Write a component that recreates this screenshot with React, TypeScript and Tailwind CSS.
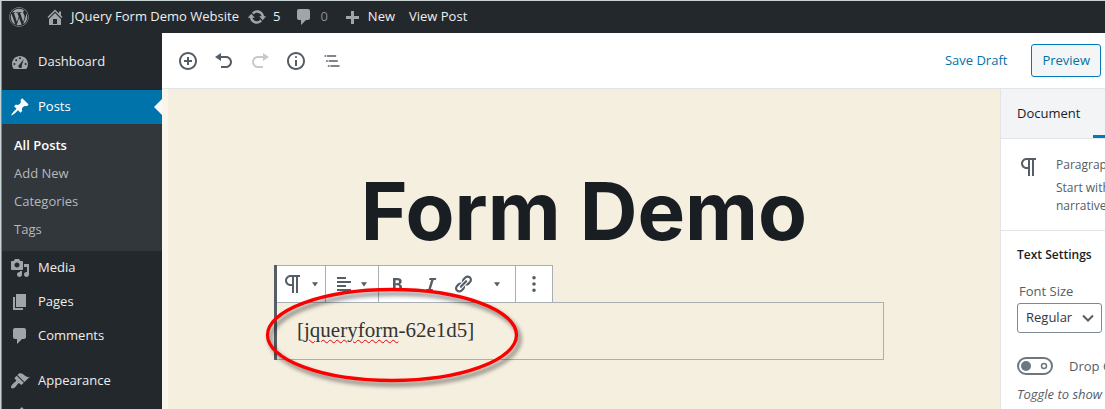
import type { ReactNode } from "react";
import { FaWordpress } from "react-icons/fa";

const paths = {
  home: "M16 8.5l1.53 1.53-1.06 1.06L10 4.6l-6.47 6.49-1.06-1.06L10 2.5l4 4v-2h2v4zm-6-2.46l6 5.99V18H4v-5.97zM12 17v-5H8v5h4z",
  update:
    "M10.2 3.28c3.53 0 6.43 2.61 6.92 6h2.08l-3.5 4-3.5-4h2.32c-.45-1.97-2.21-3.45-4.32-3.45-1.45 0-2.73.71-3.54 1.78L4.95 5.66C6.23 4.2 8.11 3.28 10.2 3.28zm-.4 13.44c-3.52 0-6.43-2.61-6.92-6H.8l3.5-4c1.17 1.33 2.33 2.67 3.5 4H5.48c.45 1.97 2.21 3.45 4.32 3.45 1.45 0 2.73-.71 3.54-1.78l1.71 1.95c-1.28 1.46-3.15 2.38-5.25 2.38z",
  comment: "M5 2h9c1.1 0 2 .9 2 2v7c0 1.1-.9 2-2 2h-2l-5 5v-5H5c-1.1 0-2-.9-2-2V4c0-1.1.9-2 2-2z",
  plus: "M17 9v3h-5v5H9v-5H4V9h5V4h3v5h5z",
  dashboard:
    "M3.76 17h12.48A7.98 7.98 0 0 0 18 12c0-4.41-3.58-8-8-8s-8 3.59-8 8c0 1.83.66 3.6 1.76 5zM9 6.2a1 1 0 1 1 2 0 1 1 0 1 1-2 0zM5.2 8.2a1 1 0 1 1 2 0 1 1 0 1 1-2 0zM3.4 12a1 1 0 1 1 2 0 1 1 0 1 1-2 0zM14.6 12a1 1 0 1 1 2 0 1 1 0 1 1-2 0zM13.9 7.1l-2.2 6.3c.5.9.2 2-.7 2.5-.9.4-2 .1-2.4-.8-.4-.8-.1-1.9.7-2.3z",
  pin: "M10.44 3.02l1.82-1.82 6.36 6.35-1.83 1.82c-1.05-.68-2.48-.57-3.41.36l-.75.75c-.92.93-1.04 2.35-.35 3.41l-1.83 1.82-2.41-2.41-2.8 2.79c-.42.42-3.38 2.71-3.8 2.29s1.86-3.39 2.28-3.81l2.79-2.79L4.1 9.36l1.83-1.82c1.05.69 2.48.57 3.4-.36l.75-.75c.93-.92 1.05-2.35.36-3.41z",
  media:
    "M13 11V4c0-.55-.45-1-1-1h-1.67L9 1H5L3.67 3H2c-.55 0-1 .45-1 1v7c0 .55.45 1 1 1h10c.55 0 1-.45 1-1zM7 4.5c1.38 0 2.5 1.12 2.5 2.5S8.38 9.5 7 9.5 4.5 8.38 4.5 7 5.62 4.5 7 4.5zM14 6h5v10.5c0 1.38-1.12 2.5-2.5 2.5S14 17.88 14 16.5s1.12-2.5 2.5-2.5c.17 0 .34.02.5.05V9h-3V6zm-4 8.05V13h2v3.5c0 1.38-1.12 2.5-2.5 2.5S7 17.88 7 16.5 8.12 14 9.5 14c.17 0 .34.02.5.05z",
  page: "M6 15V2h10v13H6zm-1 1h8v2H3V5h2v11z",
  brush:
    "M14.48 11.06L7.41 3.99l1.5-1.5c.5-.56 2.3-.47 3.51.32 1.21.8 1.43 1.28 2.91 2.1 1.18.64 2.45 1.26 4.45.85zm-.71.71L6.7 4.7 4.93 6.47c-.39.39-.39 1.02 0 1.41l1.06 1.06c.39.39.39 1.03 0 1.42-.6.6-1.43 1.11-2.21 1.69-.35.26-.7.53-1.01.84C1.43 14.23.4 16.08 1.4 17.07c.99 1 2.84-.03 4.18-1.36.31-.31.58-.66.85-1.02.57-.78 1.08-1.61 1.69-2.21.39-.39 1.02-.39 1.41 0l1.06 1.06c.39.39 1.02.39 1.41 0z",
  plugin:
    "M13.11 4.36L9.87 7.6 8 5.73l3.24-3.24c.35-.34 1.05-.2 1.56.32.52.51.66 1.21.31 1.55zm-8 1.77l.91-1.12 9.01 9.01-1.19.84c-.71.71-2.63 1.16-3.82 1.16H8.14L6.9 17.26c-.46.45-1.66.9-2.1.45s-.03-1.68.43-2.13L6.1 14.7v-2c0-1.2.3-3.01 1.01-3.72z",
  insert:
    "M10 1c-5 0-9 4-9 9s4 9 9 9 9-4 9-9-4-9-9-9zm0 16c-3.9 0-7-3.1-7-7s3.1-7 7-7 7 3.1 7 7-3.1 7-7 7zm1-11H9v3H6v2h3v3h2v-3h3V9h-3V6z",
  undo: "M12 5H7V2L1 6l6 4V7h5c2.2 0 4 1.8 4 4s-1.8 4-4 4H7v2h5c3.3 0 6-2.7 6-6s-2.7-6-6-6z",
  redo: "M8 5h5V2l6 4-6 4V7H8c-2.2 0-4 1.8-4 4s1.8 4 4 4h5v2H8c-3.3 0-6-2.7-6-6s2.7-6 6-6z",
  info: "M9 15h2V9H9v6zm1-10c-.5 0-1 .5-1 1s.5 1 1 1 1-.5 1-1-.5-1-1-1zm0-4c-5 0-9 4-9 9s4 9 9 9 9-4 9-9-4-9-9-9zm0 16c-3.9 0-7-3.1-7-7s3.1-7 7-7 7 3.1 7 7-3.1 7-7 7z",
  outline: "M5 5H3v2h2V5zm3 8h11v-2H8v2zm9-8H6v2h11V5zM7 11H5v2h2v-2zm0 8h2v-2H7v2zm3-2v2h11v-2H10z",
  paragraph:
    "M11 5v7H9.5C7.6 12 6 10.4 6 8.5S7.6 5 9.5 5H11m8-2H9.5C6.5 3 4 5.5 4 8.5S6.5 14 9.5 14H11v7h2V5h2v16h2V5h2V3z",
  align: "M12 5V3H3v2h9zm5 4V7H3v2h14zm-5 4v-2H3v2h9zm5 4v-2H3v2h14z",
  bold: "M6 4v13h4.54c1.37 0 2.46-.33 3.26-1 .8-.66 1.2-1.58 1.2-2.77 0-.84-.17-1.51-.51-2.01s-.9-.85-1.67-1.03v-.09c.57-.1 1.02-.4 1.36-.9s.51-1.13.51-1.91c0-1.14-.39-1.98-1.17-2.5C12.75 4.26 11.5 4 9.78 4H6zm2.57 5.15V6.26h1.36c.73 0 1.27.11 1.61.32.34.22.51.58.51 1.07 0 .54-.16.92-.47 1.15s-.82.35-1.51.35h-1.5zm0 2.19h1.6c1.44 0 2.16.53 2.16 1.61 0 .6-.17 1.05-.51 1.34s-.86.43-1.57.43H8.57v-3.38z",
  italic: "M14.78 6h-2.13l-2.8 9h2.12l-.62 2H4.6l.62-2h2.14l2.8-9H8.03l.62-2h6.75z",
  link: "M17.74 2.76c1.68 1.69 1.68 4.41 0 6.1l-1.53 1.52c-1.12 1.12-2.7 1.47-4.14 1.09l2.62-2.61.76-.77.76-.76c.84-.84.84-2.2 0-3.04-.84-.85-2.2-.85-3.04 0l-.77.76-3.38 3.38c-.37-1.44-.02-3.02 1.1-4.14l1.52-1.53c1.69-1.68 4.42-1.68 6.1 0zM8.59 13.43l5.34-5.34c.42-.42.42-1.1 0-1.52-.44-.43-1.13-.39-1.53 0l-5.33 5.34c-.42.42-.42 1.1 0 1.52.44.43 1.13.39 1.52 0zm-.76 2.29l4.14-4.15c.38 1.44.03 3.02-1.09 4.14l-1.52 1.53c-1.69 1.68-4.41 1.68-6.1 0-1.68-1.68-1.68-4.42 0-6.1l1.53-1.52c1.12-1.12 2.7-1.47 4.14-1.1l-4.14 4.15c-.85.84-.85 2.2 0 3.05.84.84 2.2.84 3.04 0z",
  more: "M8 3a2 2 0 1 1 4 0 2 2 0 1 1-4 0zM8 10a2 2 0 1 1 4 0 2 2 0 1 1-4 0zM8 17a2 2 0 1 1 4 0 2 2 0 1 1-4 0z",
  caret: "M5 7h10l-5 7z",
};

type IconName = keyof typeof paths;

function Icon({ name, box = 20, className = "size-5" }: { name: IconName; box?: number; className?: string }) {
  return (
    <svg viewBox={`0 0 ${box} ${box}`} fill="currentColor" fillRule="evenodd" className={`shrink-0 ${className}`} aria-hidden="true">
      <path d={paths[name]} />
    </svg>
  );
}

function MenuItem({ icon, label }: { icon: IconName; label: string }) {
  return (
    <a href="#" className="flex h-[34px] shrink-0 items-center gap-2 pl-2 text-[13px] text-[#eee]">
      <Icon name={icon} className="size-5 text-[#a0a5aa]" />
      {label}
    </a>
  );
}

function ToolButton({ label, className = "", children }: { label: string; className?: string; children: ReactNode }) {
  return (
    <button type="button" aria-label={label} className={`flex h-9 items-center justify-center ${className}`}>
      {children}
    </button>
  );
}

function AdminBar() {
  return (
    <header className="flex h-8 shrink-0 items-center bg-[#23282d] pl-[7px] text-[13px] text-[#eee]">
      <a href="#" aria-label="About WordPress" className="mr-4 text-[#a0a5aa]">
        <FaWordpress className="size-5" />
      </a>
      <a href="#" className="mr-2 flex items-center gap-1.5">
        <Icon name="home" className="size-5 text-[#a0a5aa]" />
        JQuery Form Demo Website
      </a>
      <a href="#" className="mr-3.5 flex items-center gap-1.5">
        <Icon name="update" className="size-5 text-[#a0a5aa]" />5
      </a>
      <a href="#" className="mr-3.5 flex items-center gap-1.5 text-[#8a8f94]">
        <Icon name="comment" className="size-5 text-[#a0a5aa]" />0
      </a>
      <a href="#" className="mr-3.5 flex items-center gap-1.5">
        <Icon name="plus" className="size-5 text-[#a0a5aa]" />
        New
      </a>
      <a href="#">View Post</a>
    </header>
  );
}

function Sidebar() {
  return (
    <nav aria-label="Main menu" className="flex w-40 shrink-0 flex-col overflow-hidden bg-[#23282d] pt-3">
      <MenuItem icon="dashboard" label="Dashboard" />
      <a href="#" className="relative mt-[11px] flex h-[34px] shrink-0 items-center gap-2 bg-[#0073aa] pl-2 text-[13px] text-white">
        <Icon name="pin" />
        Posts
        <span className="absolute right-0 top-[9px] border-y-8 border-r-8 border-y-transparent border-r-[#f8f8f8]" />
      </a>
      <ul className="flex shrink-0 flex-col bg-[#32373c] pb-2 pl-3 pt-[7px] text-[13px] leading-7 text-[#b4b9be]">
        <li><a href="#" className="font-semibold text-white">All Posts</a></li>
        <li><a href="#">Add New</a></li>
        <li><a href="#">Categories</a></li>
        <li><a href="#">Tags</a></li>
      </ul>
      <MenuItem icon="media" label="Media" />
      <MenuItem icon="page" label="Pages" />
      <MenuItem icon="comment" label="Comments" />
      <div className="h-[11px] shrink-0" />
      <MenuItem icon="brush" label="Appearance" />
      <MenuItem icon="plugin" label="Plugins" />
    </nav>
  );
}

function EditorHeader() {
  return (
    <div className="flex h-14 shrink-0 items-center border-b border-[#e2e4e7] bg-white pl-2 pr-1 text-[#555d66]">
      <ToolButton label="Add block" className="w-9"><Icon name="insert" /></ToolButton>
      <ToolButton label="Undo" className="w-9"><Icon name="undo" /></ToolButton>
      <ToolButton label="Redo" className="w-9 text-[#c8cbce]"><Icon name="redo" /></ToolButton>
      <ToolButton label="Content structure" className="w-9"><Icon name="info" /></ToolButton>
      <ToolButton label="Block navigation" className="w-9"><Icon name="outline" box={24} /></ToolButton>
      <button type="button" className="ml-auto mr-6 text-[13px] text-[#0073aa]">Save Draft</button>
      <button type="button" className="h-[33px] rounded-[3px] border border-[#007cba] bg-[#f3f5f6] px-2.5 text-[13px] text-[#0073aa]">
        Preview
      </button>
    </div>
  );
}

function BlockToolbar() {
  return (
    <div role="toolbar" aria-label="Block tools" className="flex w-max divide-x divide-[#a9afb0] border-y border-r border-[#a9afb0] bg-white text-[#555d66]">
      <ToolButton label="Change block type" className="w-[49px] gap-1">
        <Icon name="paragraph" box={24} className="size-6" />
        <Icon name="caret" className="size-3" />
      </ToolButton>
      <ToolButton label="Align" className="w-[53px] gap-1">
        <Icon name="align" />
        <Icon name="caret" className="size-3" />
      </ToolButton>
      <div className="flex">
        <ToolButton label="Bold" className="w-9"><Icon name="bold" /></ToolButton>
        <ToolButton label="Italic" className="w-8"><Icon name="italic" /></ToolButton>
        <ToolButton label="Link" className="w-8"><Icon name="link" /></ToolButton>
        <ToolButton label="More text controls" className="w-9"><Icon name="caret" className="size-3" /></ToolButton>
      </div>
      <ToolButton label="More options" className="w-9"><Icon name="more" className="size-[18px]" /></ToolButton>
    </div>
  );
}

function Canvas() {
  return (
    <main className="min-w-0 flex-1 bg-[#f5efe0] px-[106px]">
      <h1 className="pt-[72px] text-center font-[Inter] text-[80px] font-bold leading-[100px] text-[#191e23]">Form Demo</h1>
      <div className="relative mr-2.5 mt-1 border-l-[3px] border-[#555d66]">
        <BlockToolbar />
        <p className="-mt-px border-y border-r border-[#a9afb0] px-5 pb-[15px] pt-[13px] font-['Liberation_Serif',serif] text-[21px] leading-7 text-[#333]">
          [<span className="underline decoration-red-600 decoration-wavy decoration-1 underline-offset-2">jqueryform</span>-62e1d5]
        </p>
        <svg viewBox="0 0 264 112" className="pointer-events-none absolute -left-4 top-[17px] h-28 w-[264px]" fill="none" aria-hidden="true">
          <ellipse cx="131" cy="53" rx="124.5" ry="45.5" stroke="#fb0000" strokeWidth="3.3" className="drop-shadow-[3px_4px_2px_rgba(0,0,0,0.5)]" />
        </svg>
      </div>
    </main>
  );
}

function Inspector() {
  return (
    <aside className="w-[105px] shrink-0 overflow-hidden whitespace-nowrap border-l border-[#e2e4e7] bg-white text-[13px] text-[#555d66]">
      <div role="tablist" className="flex h-[50px] border-b border-[#e2e4e7] bg-[#f3f4f5] text-[#191e23]">
        <button type="button" role="tab" aria-selected="false" className="w-[92px] shrink-0 pl-4 text-left">Document</button>
        <button type="button" role="tab" aria-selected="true" aria-label="Block" className="w-16 shrink-0 border-b-[3px] border-[#007cba]" />
      </div>
      <section className="flex h-[92px] border-b border-[#e2e4e7] pl-4 pt-4 text-xs">
        <Icon name="paragraph" box={24} className="mr-[15px] size-6" />
        <div>
          <h2 className="leading-5">Paragraph</h2>
          <p className="mt-1 leading-[18px]">Start with the<br />narrative</p>
        </div>
      </section>
      <section className="px-4 pt-3.5">
        <h2 className="mb-[18px] text-xs font-semibold leading-5 text-[#191e23]">Text Settings</h2>
        <label htmlFor="font-size" className="block pl-0.5 leading-4">Font Size</label>
        <div className="relative mt-1 w-[85px]">
          <select id="font-size" className="h-[30px] w-full appearance-none rounded-[3px] border border-[#7e8993] bg-white pl-2 text-[13px] text-[#32373c]">
            <option>Regular</option>
          </select>
          <svg viewBox="0 0 12 12" className="pointer-events-none absolute right-2 top-[9px] size-3" fill="none" stroke="#555d66" strokeWidth="2" aria-hidden="true">
            <path d="M1 3.5l5 5 5-5" />
          </svg>
        </div>
        <label className="relative mt-[23px] flex items-center gap-4 leading-5">
          <input type="checkbox" className="sr-only" />
          <svg viewBox="0 0 36 18" className="h-[18px] w-9 shrink-0" fill="none" stroke="#6c7781" strokeWidth="2" aria-hidden="true">
            <rect x="1" y="1" width="34" height="16" rx="8" />
            <circle cx="9" cy="9" r="5" fill="#6c7781" stroke="none" />
            <circle cx="27" cy="9" r="2.5" strokeWidth="1.5" />
          </svg>
          Drop Cap
        </label>
        <p className="mt-2 italic leading-5">Toggle to show a large initial letter.</p>
      </section>
    </aside>
  );
}

export default function App() {
  return (
    <div className="flex h-screen flex-col overflow-hidden border-l border-t border-[#c9d2d3] bg-[#4f93d0] pl-px font-['Open_Sans','Noto_Sans',sans-serif]">
      <AdminBar />
      <div className="flex min-h-0 flex-1">
        <Sidebar />
        <div className="flex min-w-0 flex-1 flex-col">
          <EditorHeader />
          <div className="flex min-h-0 flex-1">
            <div className="w-1.5 shrink-0 bg-[#f9f5eb]" />
            <Canvas />
            <Inspector />
          </div>
        </div>
      </div>
    </div>
  );
}
